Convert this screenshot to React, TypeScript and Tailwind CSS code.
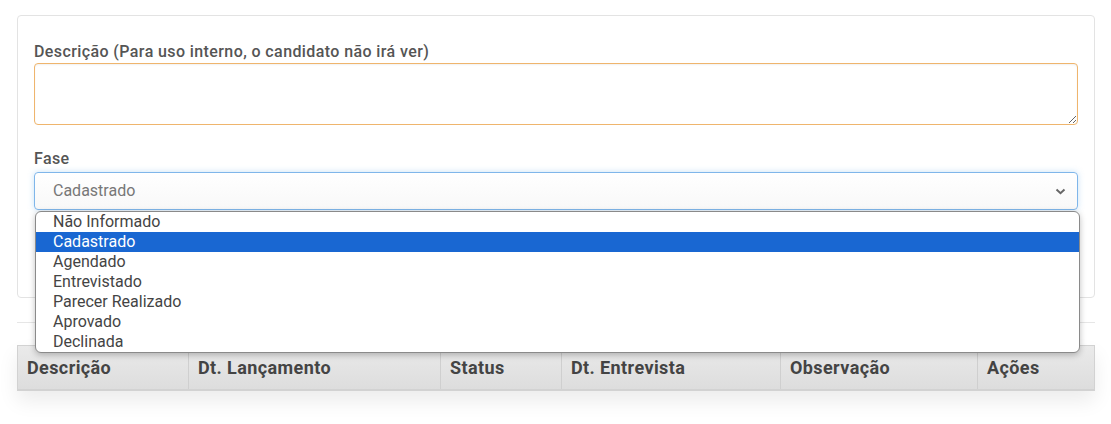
import { useState } from "react"

const fases = [
    "Não Informado",
    "Cadastrado",
    "Agendado",
    "Entrevistado",
    "Parecer Realizado",
    "Aprovado",
    "Declinada",
]

const colunas = [
    { nome: "Descrição", w: "w-[170px]" },
    { nome: "Dt. Lançamento", w: "w-[252px]" },
    { nome: "Status", w: "w-[121px]" },
    { nome: "Dt. Entrevista", w: "w-[219px]" },
    { nome: "Observação", w: "w-[197px]" },
    { nome: "Ações", w: "w-[117px]" },
]

const App = () => {
    const [fase] = useState("Cadastrado")

    return (
        <div className="min-h-[424px] bg-white pl-[17px] pr-[16px] pt-[15px] font-['Roboto',sans-serif]">

            <div className="h-[283px] rounded border border-[#e3e3e3] bg-white px-[16px] pt-[26px]">
                <label className="mb-[1px] block text-[16px] font-medium leading-[20px] tracking-[0.4px] text-[#555]">
                    Descrição (Para uso interno, o candidato não irá ver)
                </label>
                <textarea className="block h-[62px] w-full resize-y rounded border border-[#efb56d] bg-white shadow-[inset_0_1px_2px_rgba(0,0,0,0.06)] outline-none" />

                <label className="mt-[24px] mb-[3px] block text-[16px] font-medium leading-[20px] tracking-[0.4px] text-[#555]">
                    Fase
                </label>
                <div className="relative">
                    <div className="flex h-[38px] items-center justify-between rounded border border-[#7fb6ea] bg-gradient-to-b from-white to-[#f8f8f8] pl-[18px] pr-[11px] shadow-[0_0_6px_rgba(102,175,233,0.35)]">
                        <span className="text-[16px] text-[#777]">{fase}</span>
                        <svg width="11" height="7" viewBox="0 0 11 7" fill="none">
                            <path d="M1.5 1.5 L5.5 5.2 L9.5 1.5" stroke="#666" strokeWidth="2" />
                        </svg>
                    </div>

                    <ul className="absolute left-[1px] right-[-2px] top-[39px] z-10 overflow-hidden rounded-[6px] border border-[#8a8a8a] bg-white shadow-[0_2px_6px_rgba(0,0,0,0.25)]">
                        {fases.map((f) => (
                            <li
                                key={f}
                                className={
                                    f === fase
                                        ? "h-[20px] bg-[#1967d2] pl-[17px] text-[16px] leading-[20px] text-white"
                                        : "h-[20px] pl-[17px] text-[16px] leading-[20px] text-[#444]"
                                }
                            >
                                {f}
                            </li>
                        ))}
                    </ul>
                </div>
            </div>

            <div className="mt-[24px] border-t border-[#e6e6e6] pt-[22px]">
                <div className="flex border-b-[2px] border-l border-r border-t border-[#d2d2d2] bg-gradient-to-b from-[#eaeaea] to-[#dddddd] shadow-[0_10px_20px_rgba(0,0,0,0.08)]">
                    {colunas.map((c, i) => (
                        <div
                            key={c.nome}
                            className={
                                (i > 0 ? "border-l border-[#cfcfcf] " : "") +
                                c.w +
                                " shrink-0 h-[43px] pl-[9px] text-[18px] font-bold leading-[43px] tracking-[0.4px] text-[#444]"
                            }
                        >
                            {c.nome}
                        </div>
                    ))}
                </div>
            </div>
        </div>
    )
}

export default App
